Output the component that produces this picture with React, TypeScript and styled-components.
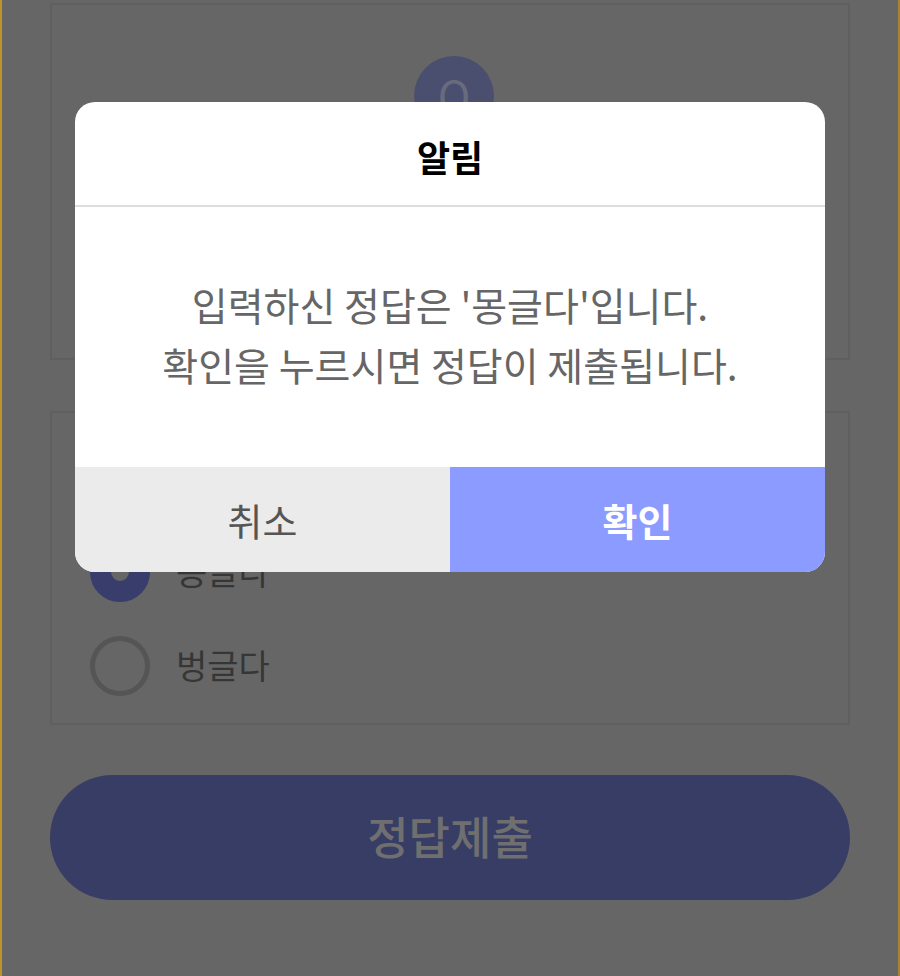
import styled, { createGlobalStyle } from "styled-components";

const GlobalStyle = createGlobalStyle`
  html, body {
    margin: 0;
    padding: 0;
    background: #666666;
  }
  * {
    box-sizing: border-box;
  }
`;

const App = () => {
  return (
    <>
      <GlobalStyle />
      <Page>
        <QuestionCard>
          <QuestionBadge>Q</QuestionBadge>
        </QuestionCard>
        <AnswerCard>
          <AnswerRow>
            <Radio $checked />
            <AnswerLabel>몽글다</AnswerLabel>
          </AnswerRow>
          <AnswerRow>
            <Radio />
            <AnswerLabel>벙글다</AnswerLabel>
          </AnswerRow>
        </AnswerCard>
        <SubmitButton>정답제출</SubmitButton>
        <Dialog>
          <DialogTitle>알림</DialogTitle>
          <DialogBody>
            <BodyLine>입력하신 정답은 '몽글다'입니다.</BodyLine>
            <BodyLine>확인을 누르시면 정답이 제출됩니다.</BodyLine>
          </DialogBody>
          <DialogActions>
            <CancelButton>취소</CancelButton>
            <ConfirmButton>확인</ConfirmButton>
          </DialogActions>
        </Dialog>
      </Page>
    </>
  );
};

const Page = styled.div`
  position: relative;
  width: 900px;
  height: 976px;
  overflow: hidden;
  padding: 3px 48px 0;
  display: flex;
  flex-direction: column;
  background: #666666;
  border-left: 2px solid #c0922c;
  border-right: 2px solid #a88334;
  font-family: "Noto Sans CJK KR", "Noto Sans", sans-serif;
`;

const QuestionCard = styled.section`
  height: 357px;
  padding: 51px 0 0 8px;
  display: flex;
  justify-content: center;
  border: 2px solid #5f5f5f;
`;

const QuestionBadge = styled.div`
  width: 80px;
  height: 80px;
  border-radius: 50%;
  background: #4a4f70;
  color: #686b7c;
  font-size: 44px;
  line-height: 76px;
  text-align: center;
`;

const AnswerCard = styled.section`
  height: 314px;
  margin-top: 51px;
  padding: 0 0 27px 38px;
  display: flex;
  flex-direction: column;
  justify-content: flex-end;
  gap: 34px;
  border: 2px solid #5f5f5f;
`;

const AnswerRow = styled.div`
  display: flex;
  align-items: center;
  gap: 26px;
  height: 60px;
`;

const Radio = styled.span<{ $checked?: boolean }>`
  width: 60px;
  height: 60px;
  flex: none;
  border-radius: 50%;
  background: ${(p) => (p.$checked ? "#666666" : "transparent")};
  border: ${(p) => (p.$checked ? "21px solid #383d6c" : "5px solid #555555")};
`;

const AnswerLabel = styled.span`
  font-size: 34px;
  line-height: 58px;
  height: 60px;
  color: #363636;
`;

const SubmitButton = styled.button`
  flex: none;
  height: 125px;
  margin-top: 50px;
  padding: 0 0 4px;
  border: none;
  border-radius: 63px;
  background: #383d65;
  color: #6f6f70;
  font-family: inherit;
  font-size: 45px;
  font-weight: 500;
`;

const Dialog = styled.div`
  position: absolute;
  left: 73px;
  top: 102px;
  width: 750px;
  height: 470px;
  display: flex;
  flex-direction: column;
  background: #ffffff;
  border-radius: 20px;
  overflow: hidden;
`;

const DialogTitle = styled.h2`
  flex: none;
  height: 105px;
  margin: 0;
  padding-top: 4px;
  display: flex;
  align-items: center;
  justify-content: center;
  border-bottom: 2px solid #dddddd;
  color: #000000;
  font-size: 36px;
  font-weight: 700;
`;

const DialogBody = styled.div`
  flex: 1;
  display: flex;
  flex-direction: column;
  align-items: center;
  justify-content: center;
  padding-bottom: 6px;
  color: #666666;
  font-size: 39px;
  font-weight: 400;
`;

const BodyLine = styled.p`
  margin: 0;
  line-height: 60px;
  white-space: nowrap;
`;

const DialogActions = styled.div`
  flex: none;
  height: 105px;
  display: grid;
  grid-template-columns: 1fr 1fr;
`;

const CancelButton = styled.button`
  padding: 0;
  border: none;
  background: #ebebeb;
  color: #555555;
  font-family: inherit;
  font-size: 38px;
  font-weight: 400;
`;

const ConfirmButton = styled(CancelButton)`
  background: #8c9bff;
  color: #ffffff;
  font-weight: 700;
`;

export default App;
